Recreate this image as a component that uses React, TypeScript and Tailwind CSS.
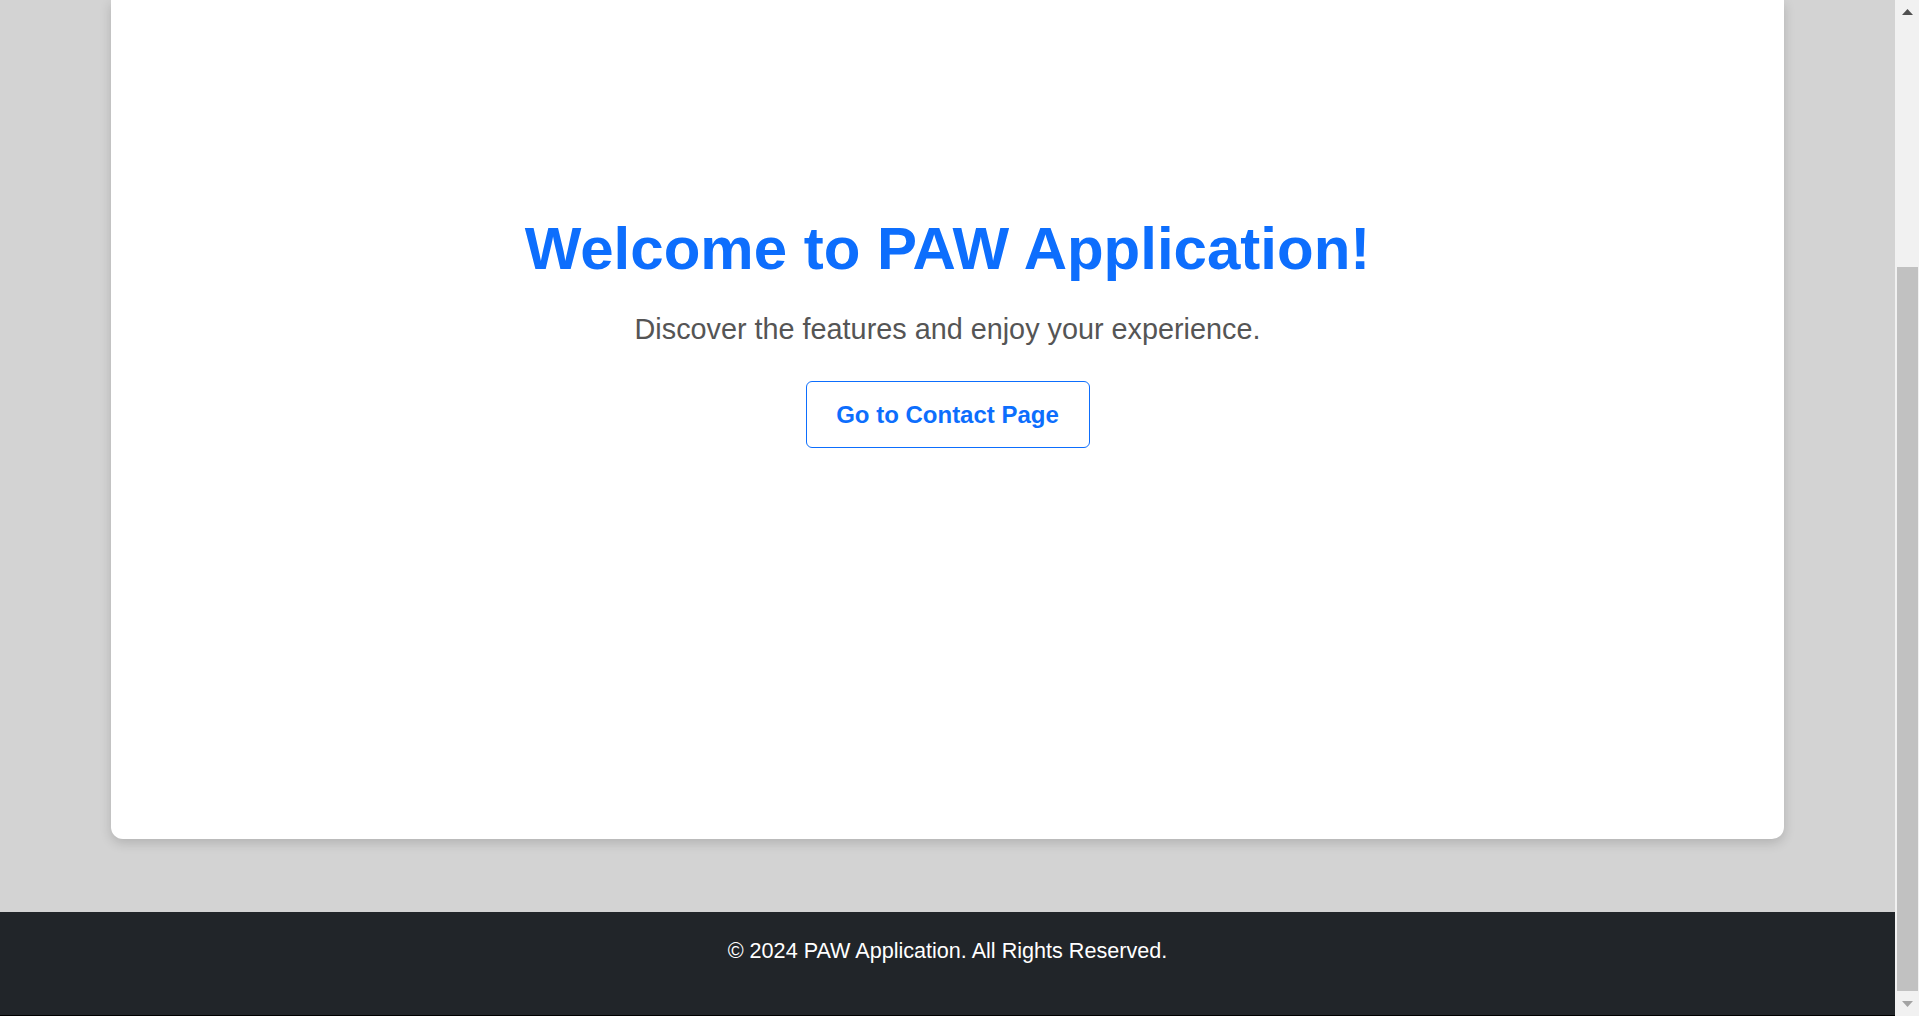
import React from "react";

const ScrollBar = () => {
  return (
    <div className="w-[24px] h-full bg-[#f1f1f1] flex flex-col items-center">
      <div className="h-[24px] w-full flex items-center justify-center">
        <svg width="11" height="6" viewBox="0 0 11 6">
          <polygon points="5.5,0 11,6 0,6" fill="#505050" />
        </svg>
      </div>
      <div className="flex-1 w-full flex flex-col pl-[2px] pr-[1px]">
        <div className="flex-1" />
        <div className="h-[724px] w-full bg-[#c1c1c1]" />
      </div>
      <div className="h-[25px] w-full flex items-center justify-center">
        <svg width="11" height="6" viewBox="0 0 11 6">
          <polygon points="0,0 11,0 5.5,6" fill="#a3a3a3" />
        </svg>
      </div>
    </div>
  );
};

const App = () => {
  return (
    <div
      className="h-[1016px] w-full flex overflow-hidden"
      style={{ fontFamily: '"Liberation Sans", Arial, sans-serif' }}
    >
      <div className="flex-1 flex flex-col bg-[#d3d3d3]">
        {/* main content */}
        <main className="px-[111px] pb-[73px]">
          <div className="h-[839px] bg-white rounded-b-xl shadow-[0_4px_12px_rgba(0,0,0,0.16)] flex flex-col items-center pt-[213px]">
            <h1 className="text-[60px] leading-[72px] font-bold text-[#0d6efd]">
              Welcome to PAW Application!
            </h1>
            <p className="mt-[23px] text-[28.8px] leading-[43px] text-[#555]">
              Discover the features and enjoy your experience.
            </p>
            <button className="mt-[30px] h-[67px] w-[284px] rounded-[6px] border border-[#0d6efd] bg-white text-[24px] font-bold text-[#0d6efd] flex items-center justify-center">
              Go to Contact Page
            </button>
          </div>
        </main>

        {/* footer */}
        <footer className="h-[104px] bg-[#212529] border-b border-black pt-[23px] text-center">
          <p className="text-[21.6px] leading-[32px] text-white">
            © 2024 PAW Application. All Rights Reserved.
          </p>
        </footer>
      </div>
      <ScrollBar />
    </div>
  );
};

export default App;
